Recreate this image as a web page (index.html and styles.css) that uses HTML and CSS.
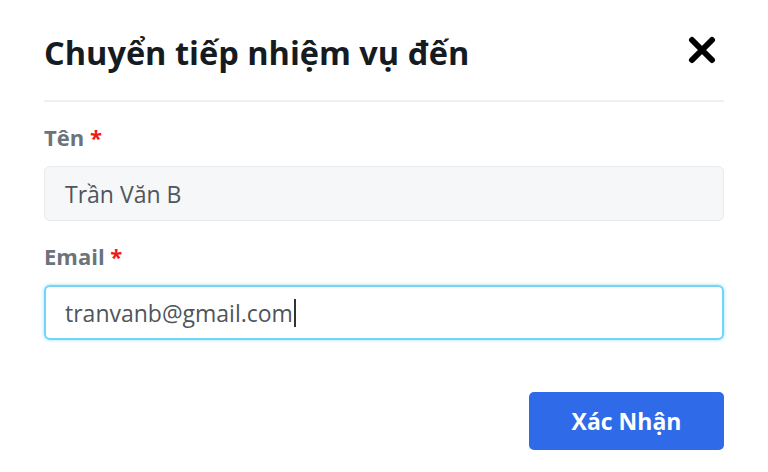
FILE: index.html
```html
<!DOCTYPE html>
<html lang="vi">
<head>
<meta charset="utf-8">
<link rel="stylesheet" href="styles.css">
</head>
<body>
<div class="modal">
  <div class="header">
    <h1 class="title">Chuyển tiếp nhiệm vụ đến</h1>
    <button class="close" aria-label="Đóng">
      <svg width="28" height="28" viewBox="0 0 28 28"><path d="M4 4 L24 24 M24 4 L4 24" stroke="#000" stroke-width="6" stroke-linecap="round" fill="none"/></svg>
    </button>
  </div>
  <div class="divider"></div>
  <div class="field">
    <label class="label">Tên <span class="req">*</span></label>
    <div class="input readonly">Trần Văn B</div>
  </div>
  <div class="field">
    <label class="label">Email <span class="req">*</span></label>
    <div class="input focused">tranvanb@gmail.com<span class="caret"></span></div>
  </div>
  <div class="footer">
    <button class="submit">Xác Nhận</button>
  </div>
</div>
</body>
</html>
```
FILE: styles.css
```css
html, body {
  margin: 0;
  padding: 0;
  background: #ffffff;
}
body {
  font-family: "Open Sans", "Noto Sans", sans-serif;
  width: 768px;
  height: 472px;
  overflow: hidden;
}
.modal {
  padding: 0 44px;
}
.header {
  display: flex;
  align-items: center;
  justify-content: space-between;
  height: 100px;
}
.title {
  margin: 0 0 -4px 0;
  font-size: 32.5px;
  font-weight: 700;
  color: #161b22;
  letter-spacing: 0;
}
.close {
  border: 0;
  background: none;
  padding: 0;
  margin-right: 8px;
  width: 28px;
  height: 28px;
  display: flex;
}
.divider {
  height: 2px;
  background: #efefef;
}
.field {
  display: flex;
  flex-direction: column;
}
.label {
  font-size: 22px;
  font-weight: 700;
  color: #6c737a;
  margin-top: 22px;
  margin-bottom: 16px;
  line-height: 26px;
}
.req {
  color: #f01818;
}
.input {
  height: 55px;
  box-sizing: border-box;
  border-radius: 6px;
  padding: 0 20px;
  display: flex;
  align-items: center;
  font-size: 23px;
  color: #50555a;
}
.readonly {
  background: #f6f7f8;
  border: 1px solid #e8eaec;
}
.focused {
  background: #fff;
  border: 2px solid #74d4f6;
  box-shadow: 0 0 3px 1px rgba(116, 212, 246, 0.45);
  padding: 0 19px;
}
.caret {
  display: inline-block;
  width: 2px;
  height: 28px;
  background: #333;
  margin-left: 1px;
}
.footer {
  display: flex;
  justify-content: flex-end;
  margin-top: 52px;
}
.submit {
  width: 195px;
  height: 58px;
  border: 0;
  border-radius: 5px;
  background: #2f6ae9;
  color: #fff;
  font-family: "Open Sans", "Noto Sans", sans-serif;
  font-size: 23px;
  font-weight: 700;
}
```
